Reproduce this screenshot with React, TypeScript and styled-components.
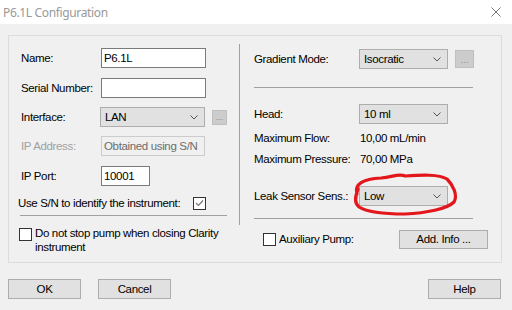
import React from 'react';
import styled, { createGlobalStyle } from 'styled-components';

const GlobalStyle = createGlobalStyle`
  html, body {
    margin: 0;
    padding: 0;
    background: #f0f0f0;
  }
  * {
    box-sizing: border-box;
  }
`;

const Window = styled.div`
  width: 512px;
  height: 310px;
  display: flex;
  flex-direction: column;
  background: #f0f0f0;
  font-family: "Liberation Sans", Arial, sans-serif;
  font-size: 11.5px;
  letter-spacing: -0.35px;
  color: #000;
  overflow: hidden;
`;

const TitleBar = styled.div`
  height: 24px;
  flex: none;
  background: #ffffff;
  display: flex;
  align-items: center;
  justify-content: space-between;
  padding: 0 11px 0 3px;
`;

const TitleText = styled.span`
  font-family: "Noto Sans", "Open Sans", sans-serif;
  font-size: 12px;
  letter-spacing: -0.35px;
  color: #999999;
`;

const Body = styled.div`
  flex: 1;
  padding: 11px 10px 0 8px;
  display: flex;
  flex-direction: column;
`;

const GroupBox = styled.div`
  height: 228px;
  border: 1px solid #dcdcdc;
  display: grid;
  grid-template-columns: 230px 1px 1fr;
`;

const Column = styled.div<{ $pl: number }>`
  display: flex;
  flex-direction: column;
  padding-left: ${p => p.$pl}px;
`;

const Divider = styled.div`
  align-self: start;
  margin-top: 8px;
  height: 181px;
  background: #a0a0a0;
`;

const Row = styled.div<{ $mt: number; $h?: number }>`
  display: flex;
  align-items: center;
  margin-top: ${p => p.$mt}px;
  height: ${p => (p.$h ?? 20)}px;
`;

const Label = styled.span<{ $w: number; $disabled?: boolean }>`
  width: ${p => p.$w}px;
  flex: none;
  white-space: nowrap;
  color: ${p => (p.$disabled ? '#a0a0a0' : '#000')};
`;

const Value = styled.span`
  padding-left: 1px;
  white-space: nowrap;
`;

const Input = styled.div<{ $w: number; $disabled?: boolean }>`
  width: ${p => p.$w}px;
  height: 20px;
  display: flex;
  align-items: center;
  padding-left: 2px;
  background: ${p => (p.$disabled ? '#f0f0f0' : '#ffffff')};
  border: 1px solid ${p => (p.$disabled ? '#cccccc' : '#7a7a7a')};
  color: ${p => (p.$disabled ? '#6d6d6d' : '#000')};
  white-space: nowrap;
`;

const SelectBox = styled.div<{ $w: number }>`
  position: relative;
  width: ${p => p.$w}px;
  height: 20px;
  display: flex;
  align-items: center;
  justify-content: space-between;
  padding: 0 6px 0 4px;
  background: #e1e1e1;
  border: 1px solid #adadad;
`;

const DotsButton = styled.div<{ $w: number; $h: number }>`
  width: ${p => p.$w}px;
  height: ${p => p.$h}px;
  margin-left: 7px;
  background: #cccccc;
  border: 1px solid #bfbfbf;
  color: #8a8a8a;
  font-size: 9px;
  letter-spacing: 0;
  display: flex;
  align-items: flex-end;
  justify-content: center;
  padding-bottom: 2px;
  line-height: 9px;
`;

const Separator = styled.div<{ $mt: number; $ml: number; $w: number }>`
  margin-top: ${p => p.$mt}px;
  margin-left: ${p => p.$ml}px;
  width: ${p => p.$w}px;
  height: 1px;
  flex: none;
  background: #a0a0a0;
`;

const CheckBox = styled.div`
  width: 13px;
  height: 13px;
  flex: none;
  background: #ffffff;
  border: 1px solid #333333;
  display: flex;
  align-items: center;
  justify-content: center;
`;

const CheckRow = styled.div`
  display: flex;
  align-items: flex-start;
  margin-top: 12px;
  margin-left: -2px;
`;

const CheckText = styled.span`
  margin-left: 3px;
  margin-top: -2px;
  max-width: 190px;
  line-height: 14px;
`;

const AuxRow = styled(Row)`
  padding-right: 13px;
  margin-left: 9px;
`;

const AuxLabel = styled.span`
  margin-left: 3px;
  white-space: nowrap;
`;

const Button = styled.div<{ $w: number }>`
  width: ${p => p.$w}px;
  height: 20px;
  flex: none;
  background: #e1e1e1;
  border: 1px solid #adadad;
  display: flex;
  align-items: center;
  justify-content: center;
  white-space: nowrap;
`;

const AddInfoButton = styled(Button)`
  margin-left: auto;
  height: 19px;
`;

const Footer = styled.div`
  display: flex;
  align-items: center;
  margin-top: 16px;
  gap: 17px;
`;

const HelpButton = styled(Button)`
  margin-left: auto;
  margin-right: 1px;
`;

const Annotation = styled.svg`
  position: absolute;
  left: -10px;
  top: -16px;
  width: 112px;
  height: 46px;
  overflow: visible;
  pointer-events: none;
`;

const Chevron = () => (
  <svg width="8" height="5" viewBox="0 0 8 5">
    <path d="M0.5 0.5 L4 4 L7.5 0.5" fill="none" stroke="#555" strokeWidth="1" />
  </svg>
);

const CheckMark = () => (
  <svg width="9" height="8" viewBox="0 0 9 8">
    <path d="M1 4 L3.5 6.5 L8 1.5" fill="none" stroke="#777" strokeWidth="1.2" />
  </svg>
);

const CloseIcon = () => (
  <svg width="10" height="10" viewBox="0 0 10 10">
    <path d="M0.5 0.5 L9.5 9.5 M9.5 0.5 L0.5 9.5" stroke="#777" strokeWidth="1" />
  </svg>
);

function Select({ value, width, children }: { value: string; width: number; children?: React.ReactNode }) {
  return (
    <SelectBox $w={width}>
      <span>{value}</span>
      <Chevron />
      {children}
    </SelectBox>
  );
}

export default function App() {
  return (
    <>
      <GlobalStyle />
      <Window>
        <TitleBar>
          <TitleText>P6.1L Configuration</TitleText>
          <CloseIcon />
        </TitleBar>
        <Body>
          <GroupBox>
            <Column $pl={12}>
              <Row $mt={12}>
                <Label $w={80}>Name:</Label>
                <Input $w={105}>P6.1L</Input>
              </Row>
              <Row $mt={10}>
                <Label $w={80}>Serial Number:</Label>
                <Input $w={105} />
              </Row>
              <Row $mt={9}>
                <Label $w={79}>Interface:</Label>
                <Select value="LAN" width={105} />
                <DotsButton $w={15} $h={15}>...</DotsButton>
              </Row>
              <Row $mt={9}>
                <Label $w={80} $disabled>IP Address:</Label>
                <Input $w={104} $disabled>Obtained using S/N</Input>
              </Row>
              <Row $mt={10}>
                <Label $w={80}>IP Port:</Label>
                <Input $w={49}>10001</Input>
              </Row>
              <Row $mt={7} style={{ marginLeft: -3 }}>
                <Label $w={175}>Use S/N to identify the instrument:</Label>
                <CheckBox>
                  <CheckMark />
                </CheckBox>
              </Row>
              <Separator $mt={2} $ml={-1} $w={207} />
              <CheckRow>
                <CheckBox />
                <CheckText>Do not stop pump when closing Clarity instrument</CheckText>
              </CheckRow>
            </Column>
            <Divider />
            <Column $pl={14}>
              <Row $mt={13}>
                <Label $w={105}>Gradient Mode:</Label>
                <Select value="Isocratic" width={89} />
                <DotsButton $w={19} $h={18}>...</DotsButton>
              </Row>
              <Separator $mt={18} $ml={0} $w={219} />
              <Row $mt={16}>
                <Label $w={105}>Head:</Label>
                <Select value="10 ml" width={89} />
              </Row>
              <Row $mt={7} $h={14}>
                <Label $w={105}>Maximum Flow:</Label>
                <Value>10,00 mL/min</Value>
              </Row>
              <Row $mt={7} $h={14}>
                <Label $w={105}>Maximum Pressure:</Label>
                <Value>70,00 MPa</Value>
              </Row>
              <Row $mt={20}>
                <Label $w={105}>Leak Sensor Sens.:</Label>
                <Select value="Low" width={89}>
                  <Annotation viewBox="349 170 112 46">
                    <path
                      d="M356 193 C353 183, 362 178, 380 177 C392 176, 398 172, 404 175 C420 174, 438 173, 446 178 C452 184, 457 194, 453 201 C446 208, 425 212, 404 213 C384 213, 366 211, 358 206 C353 202, 354 196, 357 188"
                      fill="none"
                      stroke="#e3161c"
                      strokeWidth="3.2"
                      strokeLinecap="round"
                      strokeLinejoin="round"
                    />
                  </Annotation>
                </Select>
              </Row>
              <Separator $mt={12} $ml={0} $w={219} />
              <AuxRow $mt={10}>
                <CheckBox />
                <AuxLabel>Auxiliary Pump:</AuxLabel>
                <AddInfoButton $w={89}>Add. Info ...</AddInfoButton>
              </AuxRow>
            </Column>
          </GroupBox>
          <Footer>
            <Button $w={73}>OK</Button>
            <Button $w={73}>Cancel</Button>
            <HelpButton $w={73}>Help</HelpButton>
          </Footer>
        </Body>
      </Window>
    </>
  );
}
